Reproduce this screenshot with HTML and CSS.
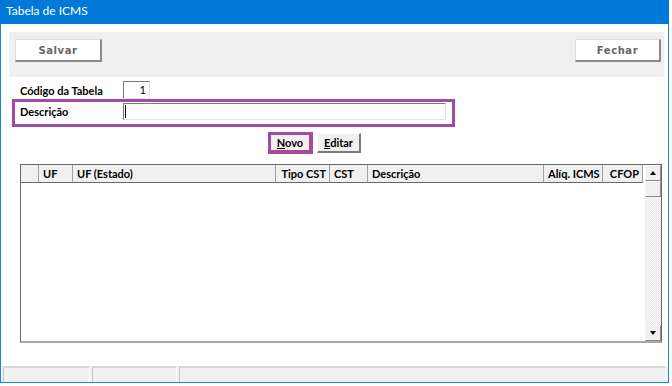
FILE: index.html
```html
<!DOCTYPE html>
<html lang="pt">
<head>
<meta charset="utf-8">
<title>Tabela de ICMS</title>
<link rel="stylesheet" href="styles.css">
</head>
<body>
<div class="window">
  <div class="titlebar">Tabela de ICMS</div>
  <div class="content">
    <div class="toolbar">
      <button class="tbtn">Salvar</button>
      <button class="tbtn">Fechar</button>
    </div>
    <div class="row row-codigo">
      <span class="lbl">Código da Tabela</span>
      <span class="inp inp-cod">1</span>
    </div>
    <div class="row row-desc">
      <span class="lbl">Descrição</span>
      <span class="inp inp-desc"><span class="caret"></span></span>
    </div>
    <div class="actions">
      <span class="focusbox"><button class="btn btn-novo"><u>N</u>ovo</button></span>
      <button class="btn btn-editar"><u>E</u>ditar</button>
    </div>
    <div class="grid">
      <div class="grid-main">
        <div class="ghead">
          <div class="hc"></div>
          <div class="hc">UF</div>
          <div class="hc">UF (Estado)</div>
          <div class="hc right">Tipo CST</div>
          <div class="hc">CST</div>
          <div class="hc">Descrição</div>
          <div class="hc right">Alíq. ICMS</div>
          <div class="hc right">CFOP</div>
        </div>
      </div>
      <div class="vscroll">
        <div class="sbtn"><span class="arrow up"></span></div>
        <div class="thumb"></div>
        <div class="track"></div>
        <div class="sbtn"><span class="arrow down"></span></div>
      </div>
    </div>
  </div>
  <div class="status">
    <div class="panel p1"></div>
    <div class="panel p2"></div>
    <div class="panel p3"></div>
  </div>
</div>
</body>
</html>
```

FILE: styles.css
```css
* { box-sizing: border-box; }
body {
  margin: 0;
  background: #ffffff;
  font-family: Lato, "Noto Sans", sans-serif;
  color: #000;
}
.window {
  width: 669px;
  height: 383px;
  border: 1px solid #1c86d9;
  border-top: none;
  display: flex;
  flex-direction: column;
  background: #fff;
}
.titlebar {
  height: 24px;
  margin: 0 -1px;
  background: #0078d7;
  color: #fff;
  font-size: 12px;
  line-height: 22px;
  padding-left: 6px;
}
.content {
  padding: 8px 4px 0 8px;
}
.toolbar {
  height: 45px;
  background: #f0f0f0;
  display: flex;
  justify-content: space-between;
  align-items: flex-start;
  padding: 7px 3px 0 6px;
}
.tbtn {
  width: 87px;
  height: 23px;
  background: #fff;
  border-style: solid;
  border-width: 1px 2px 2px 1px;
  border-color: #dcdcdc #8a8a8a #8a8a8a #dcdcdc;
  font-family: "DejaVu Sans", Verdana, sans-serif;
  font-weight: bold;
  font-size: 10px;
  letter-spacing: 0.6px;
  color: #666666;
  padding: 0;
}
.tbtn + .tbtn { width: 86px; }
.row {
  display: flex;
  align-items: center;
}
.lbl {
  width: 103px;
  font-weight: bold;
  font-size: 11px;
  line-height: 17px;
}
.inp {
  display: block;
  background: #fff;
  border-style: solid;
  border-width: 1px;
  border-color: #7a7a7a #e3e3e3 #e3e3e3 #7a7a7a;
  font-size: 11px;
}
.row-codigo {
  margin-top: 4px;
  height: 18px;
  padding-left: 11px;
}
.inp-cod {
  width: 27px;
  height: 18px;
  line-height: 16px;
  text-align: right;
  padding-right: 3px;
}
.row-desc {
  margin-left: 3px;
  width: 443px;
  height: 28px;
  border: 3px solid #a04ca6;
  align-items: flex-start;
  padding: 1px 0 0 5px;
}
.inp-desc {
  width: 323px;
  height: 17px;
  position: relative;
}
.caret {
  position: absolute;
  left: 1px;
  top: 1px;
  width: 1px;
  height: 13px;
  background: #000;
}
.actions {
  margin-top: 5px;
  height: 22px;
  padding-left: 259px;
  display: flex;
  align-items: center;
}
.focusbox {
  display: block;
  width: 45px;
  height: 22px;
  border: 3px solid #a04ca6;
}
.btn {
  display: block;
  background: #f0f0f0;
  border-style: solid;
  border-width: 1px 2px 2px 1px;
  border-color: #ffffff #7a7a7a #7a7a7a #ffffff;
  font-family: Lato, "Noto Sans", sans-serif;
  font-weight: bold;
  font-size: 11px;
  color: #000;
  padding: 0;
}
.btn-novo {
  width: 39px;
  height: 16px;
  line-height: 12px;
  border-color: #f0f0f0 #d0406a #d0406a #f0f0f0;
  border-width: 0 1px 1px 0;
}
.btn-editar {
  margin-left: 4px;
  width: 44px;
  height: 20px;
  line-height: 16px;
}
.grid {
  margin-top: 10px;
  margin-left: 11px;
  width: 642px;
  height: 179px;
  border-style: solid;
  border-width: 1px 1px 2px 1px;
  border-color: #696969 #696969 #a8a8a8 #696969;
  display: flex;
}
.grid-main {
  flex: 1;
}
.ghead {
  display: grid;
  grid-template-columns: 18px 34px 203px 54px 38px 176px 59px 40px;
  height: 18px;
}
.hc {
  background: #f0f0f0;
  border-right: 1px solid #a0a0a0;
  border-bottom: 1px solid #696969;
  font-weight: bold;
  font-size: 11px;
  line-height: 17px;
  padding: 0 3px 0 4px;
  white-space: nowrap;
  overflow: hidden;
}
.hc.right { text-align: right; }
.vscroll {
  width: 16px;
  display: flex;
  flex-direction: column;
}
.sbtn, .thumb {
  height: 16px;
  background: #f0f0f0;
  border-style: solid;
  border-width: 1px;
  border-color: #f8f8f8 #8a8a8a #8a8a8a #f8f8f8;
  display: flex;
  align-items: center;
  justify-content: center;
}
.track {
  flex: 1;
  background-color: #ffffff;
  background-image: repeating-conic-gradient(#e4e4e4 0 25%, #ffffff 0 50%);
  background-size: 2px 2px;
}
.arrow {
  width: 0;
  height: 0;
  border-left: 3.5px solid transparent;
  border-right: 3.5px solid transparent;
}
.arrow.up { border-bottom: 4px solid #000; }
.arrow.down { border-top: 4px solid #000; }
.status {
  margin-top: auto;
  height: 16px;
  display: flex;
  gap: 2px;
  padding: 0 2px 0 2px;
  background: #f0f0f0;
}
.panel {
  height: 16px;
  background: #f0f0f0;
  border-top: 2px solid #d8d8d8;
  border-left: 1px solid #c8c8c8;
  border-right: 1px solid #ffffff;
}
.p1 { width: 87px; }
.p2 { width: 85px; }
.p3 { flex: 1; }
```
